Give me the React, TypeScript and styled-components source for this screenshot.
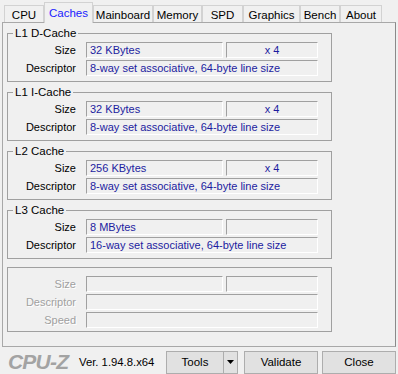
import React from 'react';
import styled, { createGlobalStyle } from 'styled-components';

const Global = createGlobalStyle`
  html, body { margin: 0; padding: 0; background: #f0f0f0; }
  body { font-family: "Liberation Sans", Arial, sans-serif; font-size: 11px; color: #000; }
  * { box-sizing: border-box; }
`;

const Window = styled.div`
  width: 398px;
  height: 374px;
  background: #f0f0f0;
  display: flex;
  flex-direction: column;
  overflow: hidden;
`;

const TabBar = styled.div`
  display: flex;
  align-items: flex-end;
  height: 22px;
  padding-left: 4px;
  position: relative;
  z-index: 1;
`;

const Tab = styled.div<{ $w: number; $active?: boolean }>`
  width: ${(p) => p.$w}px;
  height: ${(p) => (p.$active ? 21 : 17)}px;
  margin-bottom: ${(p) => (p.$active ? -1 : 0)}px;
  border: 1px solid #d2d2d2;
  border-bottom: none;
  background: #f0f0f0;
  color: ${(p) => (p.$active ? '#1a1aff' : '#000')};
  font-size: 11.5px;
  display: flex;
  align-items: center;
  justify-content: center;
  padding-top: ${(p) => (p.$active ? 0 : 1)}px;
`;

const Panel = styled.div`
  margin: 0 2px;
  height: 325px;
  border: 1px solid #a8a8a8;
  border-right-color: #8a8a8a;
  background: #f0f0f0;
  padding: 3px 0 0 4px;
  display: flex;
  flex-direction: column;
`;

const Group = styled.fieldset<{ $gap: number; $plain?: boolean }>`
  width: 325px;
  margin: ${(p) => p.$gap}px 0 0 0;
  padding: ${(p) => (p.$plain ? '8px 0 3px 0' : '2px 0 5px 0')};
  border: 1px solid #a0a0a0;
  min-width: 0;
  display: flex;
  flex-direction: column;
  gap: 2px;
`;

const Legend = styled.legend`
  margin-left: 5px;
  padding: 0 2px;
  font-size: 11.5px;
  line-height: 14px;
  height: 14px;
`;

const Row = styled.div`
  display: flex;
  align-items: center;
  height: 16px;
`;

const Label = styled.div<{ $disabled?: boolean }>`
  width: 68px;
  margin-right: 10px;
  text-align: right;
  font-size: 11px;
  color: ${(p) => (p.$disabled ? '#a0a0a0' : '#000')};
  text-shadow: ${(p) => (p.$disabled ? '1px 1px 0 #fff' : 'none')};
`;

const Field = styled.div<{ $w: number; $center?: boolean; $ml?: number }>`
  width: ${(p) => p.$w}px;
  height: 16px;
  margin-left: ${(p) => p.$ml ?? 0}px;
  border-top: 1px solid #a0a0a0;
  border-left: 1px solid #a0a0a0;
  border-right: 1px solid #fff;
  border-bottom: 1px solid #fff;
  padding-left: ${(p) => (p.$center ? 0 : 3)}px;
  text-align: ${(p) => (p.$center ? 'center' : 'left')};
  color: #1c1ca0;
  font-size: 11px;
  line-height: 14px;
  white-space: nowrap;
  overflow: hidden;
`;

const BottomBar = styled.div`
  height: 27px;
  display: flex;
  align-items: center;
  padding: 0 2px 0 8px;
`;

const Logo = styled.div`
  width: 60px;
  white-space: nowrap;
  font-size: 21px;
  font-weight: bold;
  font-style: italic;
  letter-spacing: -0.8px;
  color: #a3a3a3;
  line-height: 20px;
  margin-top: 3px;
`;

const Version = styled.div`
  margin-left: 11px;
  font-size: 11.3px;
  margin-top: 3px;
  white-space: nowrap;
`;

const Buttons = styled.div`
  margin-left: auto;
  display: flex;
  margin-top: 3px;
`;

const Button = styled.div<{ $w: number; $ml?: number; $noLeft?: boolean }>`
  width: ${(p) => p.$w}px;
  height: 23px;
  margin-left: ${(p) => p.$ml ?? 0}px;
  background: #e1e1e1;
  border: 1px solid #adadad;
  border-left-width: ${(p) => (p.$noLeft ? 0 : 1)}px;
  display: flex;
  align-items: center;
  justify-content: center;
  font-size: 11.5px;
`;

const tabs: [string, number][] = [
  ['CPU', 40],
  ['Caches', 49],
  ['Mainboard', 60],
  ['Memory', 49],
  ['SPD', 41],
  ['Graphics', 57],
  ['Bench', 40],
  ['About', 42],
];

const caches = [
  { name: 'L1 D-Cache', size: '32 KBytes', mult: 'x 4', desc: '8-way set associative, 64-byte line size' },
  { name: 'L1 I-Cache', size: '32 KBytes', mult: 'x 4', desc: '8-way set associative, 64-byte line size' },
  { name: 'L2 Cache', size: '256 KBytes', mult: 'x 4', desc: '8-way set associative, 64-byte line size' },
  { name: 'L3 Cache', size: '8 MBytes', mult: '', desc: '16-way set associative, 64-byte line size' },
];

export default function App() {
  return (
    <Window>
      <Global />
      <TabBar>
        {tabs.map(([t, w]) => (
          <Tab key={t} $w={w} $active={t === 'Caches'}>
            {t}
          </Tab>
        ))}
      </TabBar>
      <Panel>
        {caches.map((c, i) => (
          <Group key={c.name} $gap={i === 0 ? 0 : 3}>
            <Legend>{c.name}</Legend>
            <Row>
              <Label>Size</Label>
              <Field $w={137}>{c.size}</Field>
              <Field $w={92} $ml={3} $center>
                {c.mult}
              </Field>
            </Row>
            <Row>
              <Label>Descriptor</Label>
              <Field $w={232}>{c.desc}</Field>
            </Row>
          </Group>
        ))}
        <Group $gap={8} $plain>
          <Row>
            <Label $disabled>Size</Label>
            <Field $w={137} />
            <Field $w={92} $ml={3} />
          </Row>
          <Row>
            <Label $disabled>Descriptor</Label>
            <Field $w={232} />
          </Row>
          <Row>
            <Label $disabled>Speed</Label>
            <Field $w={232} />
          </Row>
        </Group>
      </Panel>
      <BottomBar>
        <Logo>CPU-Z</Logo>
        <Version>Ver. 1.94.8.x64</Version>
        <Buttons>
          <Button $w={58}>Tools</Button>
          <Button $w={14} $noLeft>
            <svg width="7" height="4" viewBox="0 0 7 4">
              <polygon points="0,0 7,0 3.5,4" fill="#000" />
            </svg>
          </Button>
          <Button $w={74} $ml={6}>Validate</Button>
          <Button $w={74} $ml={4}>Close</Button>
        </Buttons>
      </BottomBar>
    </Window>
  );
}
